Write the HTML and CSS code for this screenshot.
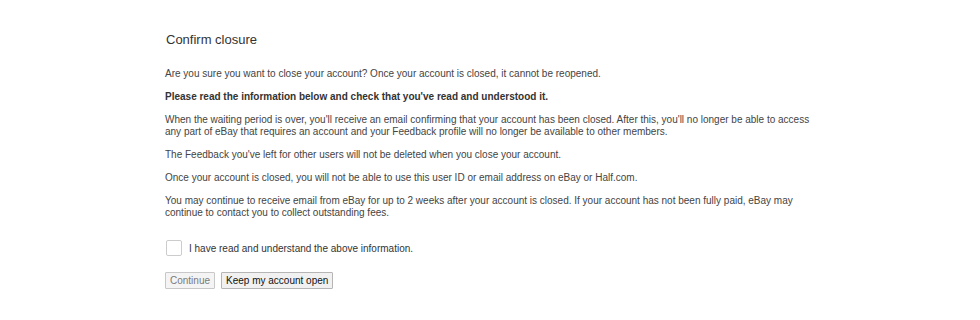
FILE: index.html
```html
<!DOCTYPE html>
<html>
<head>
<meta charset="utf-8">
<link rel="stylesheet" href="styles.css">
</head>
<body>
<div class="page">
  <h1 class="title">Confirm closure</h1>
  <p class="para">Are you sure you want to close your account? Once your account is closed, it cannot be reopened.</p>
  <p class="para bold">Please read the information below and check that you've read and understood it.</p>
  <p class="para">When the waiting period is over, you'll receive an email confirming that your account has been closed. After this, you'll no longer be able to access any part of eBay that requires an account and your Feedback profile will no longer be available to other members.</p>
  <p class="para">The Feedback you've left for other users will not be deleted when you close your account.</p>
  <p class="para">Once your account is closed, you will not be able to use this user ID or email address on eBay or Half.com.</p>
  <p class="para">You may continue to receive email from eBay for up to 2 weeks after your account is closed. If your account has not been fully paid, eBay may continue to contact you to collect outstanding fees.</p>
  <label class="check-row">
    <span class="checkbox"></span>
    <span class="check-label">I have read and understand the above information.</span>
  </label>
  <div class="buttons">
    <button class="btn btn-disabled">Continue</button>
    <button class="btn">Keep my account open</button>
  </div>
</div>
</body>
</html>
```
FILE: styles.css
```css
html, body {
  margin: 0;
  padding: 0;
  background: #fff;
}
body {
  font-family: "Liberation Sans", Arial, sans-serif;
  color: #333;
}
.page {
  width: 652px;
  margin-left: 165px;
  padding-top: 31px;
}
.title {
  font-size: 13px;
  font-weight: normal;
  color: #333;
  margin: 0 0 19px 1px;
  line-height: 18px;
}
.para {
  font-size: 10px;
  line-height: 12px;
  margin: 0 0 11px 0;
  color: #444;
}
.bold {
  font-weight: bold;
  color: #333;
}
.check-row {
  display: flex;
  align-items: center;
  gap: 7px;
  margin-top: 21px;
  margin-left: 1px;
}
.checkbox {
  width: 14px;
  height: 14px;
  border: 1px solid #ccc;
  border-radius: 2px;
  background: #fff;
}
.check-label {
  font-size: 10px;
  color: #333;
}
.buttons {
  display: flex;
  gap: 6px;
  margin-top: 16px;
}
.btn {
  font-family: "Liberation Sans", Arial, sans-serif;
  font-size: 10px;
  height: 17px;
  padding: 0 4px;
  border: 1px solid #b5b5b5;
  background: #f1f1f1;
  color: #111;
  border-radius: 1px;
  line-height: 15px;
}
.btn-disabled {
  color: #7a7a7a;
  border-color: #c8c8c8;
  background: #f4f4f4;
}
```
